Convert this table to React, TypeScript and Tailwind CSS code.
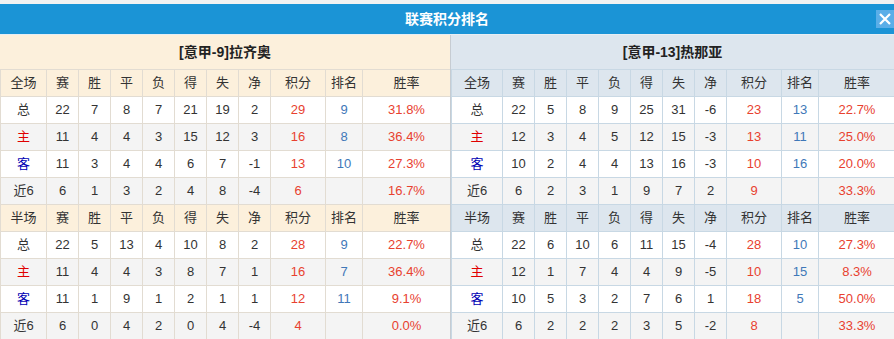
import React from "react";

type Row = { label: string; cells: (string | number)[]; pts: string | number; rank: string | number; rate: string };

type Side = {
  team: string;
  widths: number[];
  theme: "left" | "right";
  full: Row[];
  half: Row[];
};

const HEAD = ["赛", "胜", "平", "负", "得", "失", "净", "积分", "排名", "胜率"];

const sides: Side[] = [
  {
    team: "[意甲-9]拉齐奥",
    widths: [46, 32, 32, 32, 32, 32, 32, 32, 55, 37, 88],
    theme: "left",
    full: [
      { label: "总", cells: [22, 7, 8, 7, 21, 19, 2], pts: 29, rank: 9, rate: "31.8%" },
      { label: "主", cells: [11, 4, 4, 3, 15, 12, 3], pts: 16, rank: 8, rate: "36.4%" },
      { label: "客", cells: [11, 3, 4, 4, 6, 7, -1], pts: 13, rank: 10, rate: "27.3%" },
      { label: "近6", cells: [6, 1, 3, 2, 4, 8, -4], pts: 6, rank: "", rate: "16.7%" },
    ],
    half: [
      { label: "总", cells: [22, 5, 13, 4, 10, 8, 2], pts: 28, rank: 9, rate: "22.7%" },
      { label: "主", cells: [11, 4, 4, 3, 8, 7, 1], pts: 16, rank: 7, rate: "36.4%" },
      { label: "客", cells: [11, 1, 9, 1, 2, 1, 1], pts: 12, rank: 11, rate: "9.1%" },
      { label: "近6", cells: [6, 0, 4, 2, 0, 4, -4], pts: 4, rank: "", rate: "0.0%" },
    ],
  },
  {
    team: "[意甲-13]热那亚",
    widths: [51, 32, 32, 32, 32, 32, 32, 32, 55, 37, 77],
    theme: "right",
    full: [
      { label: "总", cells: [22, 5, 8, 9, 25, 31, -6], pts: 23, rank: 13, rate: "22.7%" },
      { label: "主", cells: [12, 3, 4, 5, 12, 15, -3], pts: 13, rank: 11, rate: "25.0%" },
      { label: "客", cells: [10, 2, 4, 4, 13, 16, -3], pts: 10, rank: 16, rate: "20.0%" },
      { label: "近6", cells: [6, 2, 3, 1, 9, 7, 2], pts: 9, rank: "", rate: "33.3%" },
    ],
    half: [
      { label: "总", cells: [22, 6, 10, 6, 11, 15, -4], pts: 28, rank: 10, rate: "27.3%" },
      { label: "主", cells: [12, 1, 7, 4, 4, 9, -5], pts: 10, rank: 15, rate: "8.3%" },
      { label: "客", cells: [10, 5, 3, 2, 7, 6, 1], pts: 18, rank: 5, rate: "50.0%" },
      { label: "近6", cells: [6, 2, 2, 2, 3, 5, -2], pts: 8, rank: "", rate: "33.3%" },
    ],
  },
];

function labelColor(label: string) {
  if (label === "主") return "text-[#e00000]";
  if (label === "客") return "text-[#0000b4]";
  return "text-[#333]";
}

function StandingsSide({ side }: { side: Side }) {
  const isLeft = side.theme === "left";
  const headBg = isLeft ? "bg-[#fcf0dc]" : "bg-[#dde6ee]";
  const line = isLeft ? "border-[#e2dcd2]" : "border-[#c8d8e4]";

  const headRow = (first: string) => (
    <tr className={`h-[27px] ${headBg}`}>
      <td className={`border ${line}`}>{first}</td>
      {HEAD.map((h) => (
        <td key={h} className={`border ${line}`}>
          {h}
        </td>
      ))}
    </tr>
  );

  const body = (rows: Row[]) =>
    rows.map((r, i) => (
      <tr key={r.label} className={`h-[27px] ${i % 2 === 1 ? "bg-[#f4f4f4]" : "bg-white"}`}>
        <td className={`border ${line} ${labelColor(r.label)}`}>{r.label}</td>
        {r.cells.map((c, j) => (
          <td key={j} className={`border ${line}`}>
            {c}
          </td>
        ))}
        <td className={`border ${line} text-[#e8412f]`}>{r.pts}</td>
        <td className={`border ${line} text-[#3f78b8]`}>{r.rank}</td>
        <td className={`border ${line} text-[#e8412f]`}>{r.rate}</td>
      </tr>
    ));

  return (
    <div className={`flex flex-col ${isLeft ? "w-[450px]" : "w-[444px] border-l border-[#c6ccd2]"}`}>
      <div className={`flex h-[34px] items-center justify-center font-bold text-[14px] text-[#222] ${headBg}`}>
        {side.team}
      </div>
      <table className="w-full table-fixed border-collapse text-center text-[13px] text-[#333]">
        <colgroup>
          {side.widths.map((w, i) => (
            <col key={i} style={{ width: w }} />
          ))}
        </colgroup>
        <tbody>
          {headRow("全场")}
          {body(side.full)}
          {headRow("半场")}
          {body(side.half)}
        </tbody>
      </table>
    </div>
  );
}

export default function App() {
  return (
    <div
      className="w-[894px] h-[339px] overflow-hidden bg-[#f2f2f2] pt-[4px]"
      style={{ fontFamily: '"Liberation Sans", "Noto Sans CJK SC", sans-serif' }}
    >
      <div className="relative flex h-[30px] items-center justify-center bg-[#1b94d6] text-[14px] font-bold text-white">
        联赛积分排名
        <div className="absolute right-0 top-[6px] flex h-[18px] w-[18px] items-center justify-center bg-[#5aaee8]">
          <svg width="14" height="14" viewBox="0 0 14 14">
            <path d="M2 2 L12 12 M12 2 L2 12" stroke="white" strokeWidth="2.2" />
          </svg>
        </div>
      </div>
      <div className="h-px bg-[#e6eef4]" />
      <div className="flex">
        {sides.map((s) => (
          <StandingsSide key={s.team} side={s} />
        ))}
      </div>
    </div>
  );
}
